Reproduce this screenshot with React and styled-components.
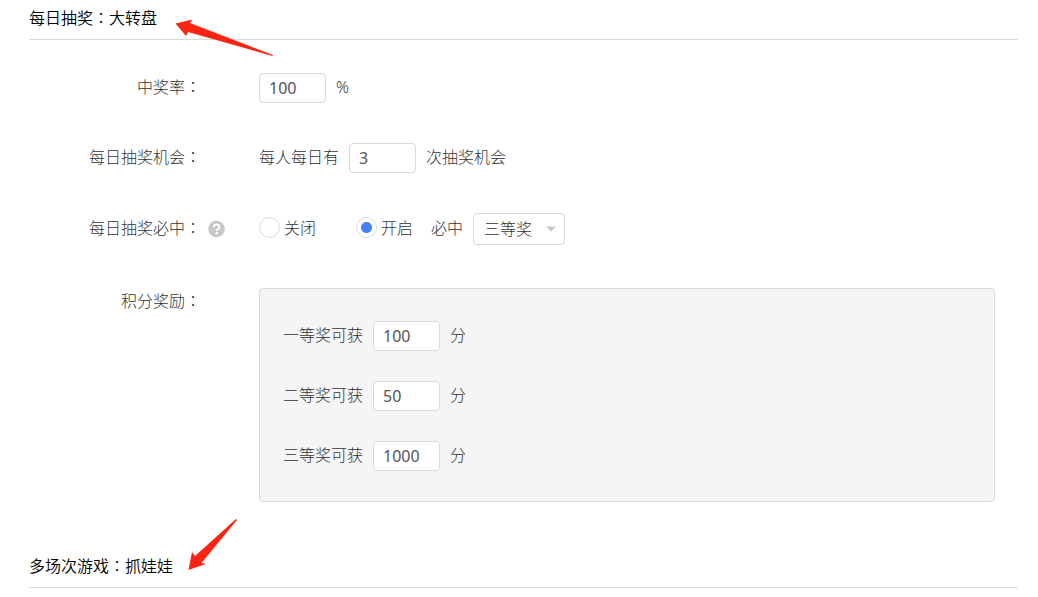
import React from "react";
import styled, { createGlobalStyle } from "styled-components";

const GlobalStyle = createGlobalStyle`
  * { box-sizing: border-box; }
  body {
    margin: 0;
    background: #fff;
    color: #333;
    font: 300 16px/24px "Noto Sans", "Noto Sans CJK SC", sans-serif;
  }
  input, select { font: inherit; color: inherit; margin: 0; }
`;

const Page = styled.main`
  padding: 0 20px 0 29px;
`;

const Title = styled.h2`
  display: flex;
  align-items: flex-start;
  height: 40px;
  margin: 0;
  padding-top: 5px;
  border-bottom: 1px solid #d9d9d9;
  color: #000;
  font-size: 16px;
  font-weight: 350;
  line-height: 24px;
`;

const TitleText = styled.span`
  position: relative;
`;

const Arrow = styled.svg`
  position: absolute;
  left: 100%;
  top: ${(p) => p.$top}px;
  pointer-events: none;
  fill: #fc2413;
`;

const ColonMark = styled.span`
  font-family: "Noto Sans CJK TC", sans-serif;
  font-weight: 300;
`;
const Colon = () => <ColonMark>：</ColonMark>;

const Form = styled.form`
  display: flex;
  flex-direction: column;
  gap: 40px;
  padding: 33px 23px 46px 0;
`;

const Row = styled.div`
  display: grid;
  grid-template-columns: 172px 58px 1fr;
  align-items: ${(p) => (p.$top ? "start" : "center")};
  margin-top: ${(p) => (p.$top ? 3 : 0)}px;
`;

const RowLabel = styled.label`
  grid-column: 1;
  padding-bottom: 4px;
  text-align: right;
`;

const Help = styled.span`
  display: flex;
  padding-left: 7px;
`;

const Controls = styled.div`
  grid-column: 3;
  display: flex;
  align-items: center;
  gap: 10px;
`;

const Text = styled.span`
  padding-bottom: 2px;
`;

const NumberBox = styled.input`
  width: 67px;
  height: 30px;
  padding: 0 9px;
  border: 1px solid #d9d9d9;
  border-radius: 4px;
  background: #fff;
  color: #555;
  font-weight: 400;
`;

const Choice = styled.label`
  display: flex;
  align-items: center;
  gap: 4px;
  margin-right: ${(p) => p.$after}px;
  padding-bottom: 3px;
`;

const Radio = styled.input`
  appearance: none;
  width: 21px;
  height: 21px;
  border: 1px solid #d9d9d9;
  border-radius: 50%;
  background: #fff;
  &:checked {
    background: radial-gradient(circle, #4482f6 5px, #fff 6px);
  }
`;

const SelectWrap = styled.span`
  position: relative;
  display: flex;
`;

const Select = styled.select`
  appearance: none;
  width: 92px;
  height: 32px;
  padding: 0 10px;
  border: 1px solid #d9d9d9;
  border-radius: 4px;
  background: #fff;
`;

const Caret = styled.svg`
  position: absolute;
  right: 9px;
  top: 13px;
  pointer-events: none;
  fill: #c8c8c8;
`;

const Panel = styled.div`
  grid-column: 3;
  display: flex;
  flex-direction: column;
  gap: 30px;
  padding: 32px 23px 30px;
  border: 1px solid #d9d9d9;
  border-radius: 4px;
  background: #f5f5f5;
`;

const PrizeLine = styled.div`
  display: flex;
  align-items: center;
  gap: 10px;
`;

const prizes = [
  { id: "first", label: "一等奖可获", value: "100" },
  { id: "second", label: "二等奖可获", value: "50" },
  { id: "third", label: "三等奖可获", value: "1000" },
];

export default function App() {
  return (
    <>
      <GlobalStyle />
      <Page>
        <Title>
          <TitleText>
            每日抽奖<Colon />大转盘
            <Arrow $top={13} width="120" height="42" viewBox="0 0 120 42">
              <path d="M18.5 5.5 L35.5 1.5 L33 5 L116 37 L115.5 38 L31 14 L29 18 Z" />
            </Arrow>
          </TitleText>
        </Title>

        <Form>
          <Row>
            <RowLabel htmlFor="rate">中奖率<Colon /></RowLabel>
            <Controls>
              <NumberBox id="rate" defaultValue="100" />
              <Text>%</Text>
            </Controls>
          </Row>

          <Row>
            <RowLabel htmlFor="chances">每日抽奖机会<Colon /></RowLabel>
            <Controls>
              <Text>每人每日有</Text>
              <NumberBox id="chances" defaultValue="3" />
              <Text>次抽奖机会</Text>
            </Controls>
          </Row>

          <Row role="radiogroup" aria-labelledby="must-win">
            <RowLabel as="span" id="must-win">每日抽奖必中<Colon /></RowLabel>
            <Help>
              <svg width="18" height="18" viewBox="0 0 18 18" aria-hidden="true">
                <circle cx="8.5" cy="9" r="8.3" fill="#c6c6c6" />
                <path d="M5.7 7.2 C5.7 3.6 11.5 3.6 11.5 6.9 C11.5 9 8.7 8.9 8.7 11" fill="none" stroke="#fff" strokeWidth="2" />
                <circle cx="8.7" cy="13.3" r="1.3" fill="#fff" />
              </svg>
            </Help>
            <Controls>
              <Choice $after={30}>
                <Radio type="radio" name="must" value="off" />
                关闭
              </Choice>
              <Choice $after={8}>
                <Radio type="radio" name="must" value="on" defaultChecked />
                开启
              </Choice>
              <Text as="label" htmlFor="prize">必中</Text>
              <SelectWrap>
                <Select id="prize" defaultValue="三等奖">
                  <option>一等奖</option>
                  <option>二等奖</option>
                  <option>三等奖</option>
                </Select>
                <Caret width="10" height="6" viewBox="0 0 10 6">
                  <path d="M0 0.5 H10 L5 5.5 Z" />
                </Caret>
              </SelectWrap>
            </Controls>
          </Row>

          <Row $top>
            <RowLabel as="span">积分奖励<Colon /></RowLabel>
            <Panel>
              {prizes.map((p) => (
                <PrizeLine key={p.id}>
                  <Text as="label" htmlFor={p.id}>{p.label}</Text>
                  <NumberBox id={p.id} defaultValue={p.value} />
                  <Text>分</Text>
                </PrizeLine>
              ))}
            </Panel>
          </Row>
        </Form>

        <Title>
          <TitleText>
            多场次游戏<Colon />抓娃娃
            <Arrow $top={-35} width="70" height="60" viewBox="0 0 70 60">
              <path d="M15.5 52 L19 34 L22 38 L63 1 L64 2 L28.5 45 L33 46 Z" />
            </Arrow>
          </TitleText>
        </Title>
      </Page>
    </>
  );
}
